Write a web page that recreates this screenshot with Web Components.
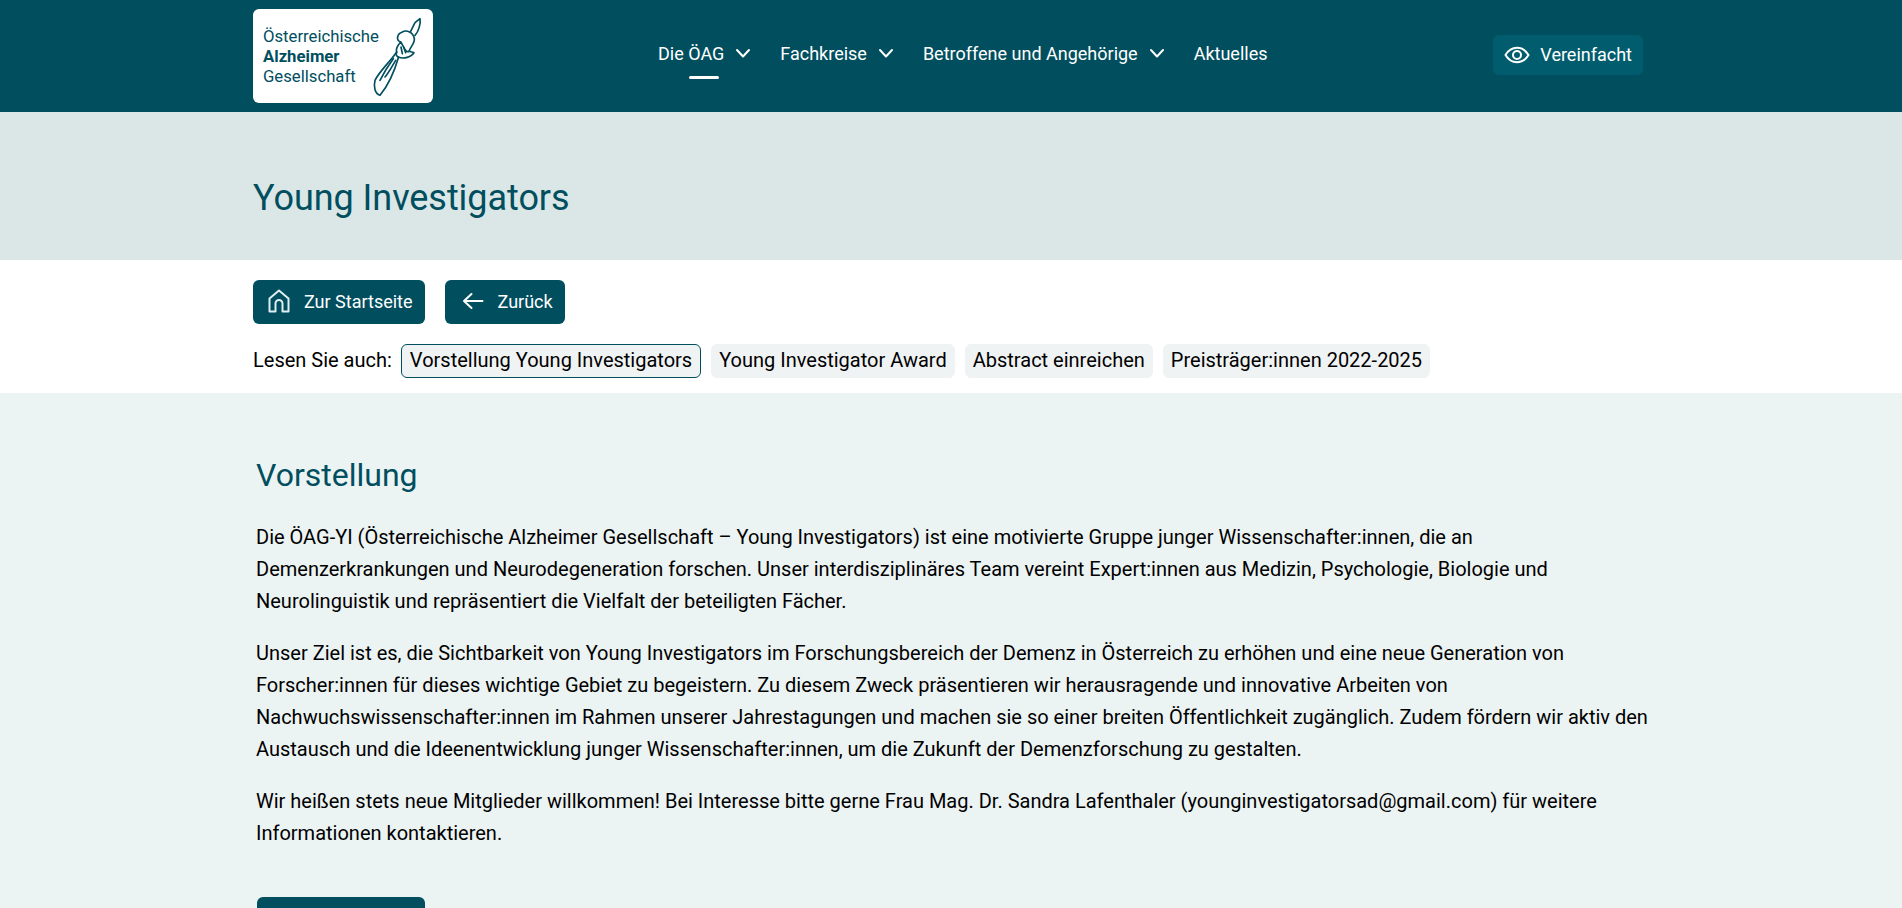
<!DOCTYPE html>
<html lang="de">
<head>
<meta charset="utf-8">
<title>Young Investigators</title>
<style>
  html, body { margin: 0; height: 908px; overflow: hidden; }
  body { font-family: Roboto, "Liberation Sans", sans-serif; color: #000; background: #fff; }
</style>
</head>
<body>
<site-header></site-header>
<page-hero>Young Investigators</page-hero>
<sub-nav></sub-nav>
<content-section>
  <h-title slot="title">Vorstellung</h-title>
  <text-para>Die ÖAG-YI (Österreichische Alzheimer Gesellschaft – Young Investigators) ist eine motivierte Gruppe junger Wissenschafter:innen, die an Demenzerkrankungen und Neurodegeneration forschen. Unser interdisziplinäres Team vereint Expert:innen aus Medizin, Psychologie, Biologie und Neurolinguistik und repräsentiert die Vielfalt der beteiligten Fächer.</text-para>
  <text-para>Unser Ziel ist es, die Sichtbarkeit von Young Investigators im Forschungsbereich der Demenz in Österreich zu erhöhen und eine neue Generation von Forscher:innen für dieses wichtige Gebiet zu begeistern. Zu diesem Zweck präsentieren wir herausragende und innovative Arbeiten von Nachwuchswissenschafter:innen im Rahmen unserer Jahrestagungen und machen sie so einer breiten Öffentlichkeit zugänglich. Zudem fördern wir aktiv den Austausch und die Ideenentwicklung junger Wissenschafter:innen, um die Zukunft der Demenzforschung zu gestalten.</text-para>
  <text-para>Wir heißen stets neue Mitglieder willkommen! Bei Interesse bitte gerne Frau Mag. Dr. Sandra Lafenthaler (younginvestigatorsad@gmail.com) für weitere Informationen kontaktieren.</text-para>
  <div slot="after" style="width:168px;height:44px;background:#004e5e;border-radius:6px;margin-left:1px"></div>
</content-section>

<script>
class SiteLogo extends HTMLElement {
  constructor() {
    super();
    this.attachShadow({ mode: "open" });
    this.shadowRoot.innerHTML = `
      <style>
        :host { display: block; width: 180px; height: 94px; background: #fff; border-radius: 6px; position: relative; color: #004e5e; }
        .txt { position: absolute; left: 10px; top: 18px; font-size: 16.7px; line-height: 20px; white-space: nowrap; }
        b { font-weight: 700; display: block; }
        svg { position: absolute; left: 112px; top: 3px; }
      </style>
      <div class="txt">Österreichische<b>Alzheimer</b>Gesellschaft</div>
      <svg width="65" height="88" viewBox="0 0 195 264" fill="none" stroke="#004e5e" stroke-width="5" stroke-linejoin="round" stroke-linecap="round">
        <path d="M137 58L150 32L165 20C168 35 160 60 150 70"/>
        <path d="M107 90C92 85 96 65 112 60C125 52 145 62 148 80C150 95 135 105 132 118C137 120 142 120 147 122C140 135 115 142 100 135"/>
        <path d="M107 90C115 100 122 125 132 118M107 90C98 100 92 112 95 122M100 135C94 132 92 126 95 122"/>
        <path d="M95 120C75 150 45 175 30 205C25 225 30 245 45 250C65 225 85 190 100 137"/>
        <path d="M85 140C70 160 55 185 45 205M92 145C80 165 70 185 60 195M108 105L112 125M116 105L122 122"/>
      </svg>
    `;
  }
}
customElements.define("site-logo", SiteLogo);

class NavItem extends HTMLElement {
  constructor() {
    super();
    this.attachShadow({ mode: "open" });
    this.shadowRoot.innerHTML = `
      <style>
        :host { display: flex; align-items: center; gap: 10px; height: 112px; padding-bottom: 6px; box-sizing: border-box; position: relative; font-size: 18px; font-weight: 450; color: #fff; white-space: nowrap; }
        svg { display: block; }
        :host([plain]) svg { display: none; }
        .bar { display: none; position: absolute; left: 31px; bottom: 33px; width: 30px; height: 3px; background: #fff; border-radius: 2px; }
        :host([active]) .bar { display: block; }
      </style>
      <slot></slot>
      <svg width="18" height="18" viewBox="0 0 18 18" fill="none" stroke="#fff" stroke-width="2" stroke-linecap="round" stroke-linejoin="round"><path d="M3 6l6 6.5L15 6"/></svg>
      <span class="bar"></span>
    `;
  }
}
customElements.define("nav-item", NavItem);

class SiteHeader extends HTMLElement {
  constructor() {
    super();
    this.attachShadow({ mode: "open" });
    this.shadowRoot.innerHTML = `
      <style>
        :host { display: block; height: 112px; background: #004e5e; }
        .inner { width: 1396px; margin: 0 auto; height: 112px; display: flex; align-items: center; }
        nav { display: flex; gap: 28px; margin-left: 225px; }
        .simple { margin-left: auto; margin-right: 6px; margin-bottom: 3px; display: flex; align-items: center; gap: 10px; height: 40px; padding: 0 11px; background: #015d6d; border-radius: 6px; color: #fff; font-size: 18px; font-weight: 450; }
      </style>
      <div class="inner">
        <site-logo></site-logo>
        <nav>
          <nav-item active>Die ÖAG</nav-item>
          <nav-item>Fachkreise</nav-item>
          <nav-item>Betroffene und Angehörige</nav-item>
          <nav-item plain>Aktuelles</nav-item>
        </nav>
        <div class="simple">
          <svg width="26" height="18" viewBox="0 0 26 18" fill="none" stroke="#fff" stroke-width="2"><path d="M1.5 9C4.5 4 8.5 1.8 13 1.8S21.5 4 24.5 9C21.5 14 17.5 16.2 13 16.2S4.5 14 1.5 9Z"/><circle cx="13" cy="9" r="4"/></svg>
          Vereinfacht
        </div>
      </div>
    `;
  }
}
customElements.define("site-header", SiteHeader);

class PageHero extends HTMLElement {
  constructor() {
    super();
    this.attachShadow({ mode: "open" });
    this.shadowRoot.innerHTML = `
      <style>
        :host { display: block; height: 148px; background: #dbe6e6; }
        h1 { width: 1396px; margin: 0 auto; height: 148px; padding-top: 24px; box-sizing: border-box; display: flex; align-items: center; font-size: 36px; font-weight: 400; letter-spacing: -0.05px; color: #004e5e; }
      </style>
      <h1><slot></slot></h1>
    `;
  }
}
customElements.define("page-hero", PageHero);

class ActionButton extends HTMLElement {
  constructor() {
    super();
    this.attachShadow({ mode: "open" });
    this.shadowRoot.innerHTML = `
      <style>
        :host { display: inline-flex; align-items: center; gap: 14px; height: 44px; padding: 0 12px 2px 15px; background: #004e5e; border-radius: 6px; color: #fff; font-size: 18px; font-weight: 450; box-sizing: border-box; }
        ::slotted(svg) { display: block; }
      </style>
      <slot name="icon"></slot><slot></slot>
    `;
  }
}
customElements.define("action-button", ActionButton);

class LinkTag extends HTMLElement {
  constructor() {
    super();
    this.attachShadow({ mode: "open" });
    this.shadowRoot.innerHTML = `
      <style>
        :host { display: inline-flex; align-items: center; height: 34px; padding: 0 7px 2px; background: #f0f3f4; border: 1px solid #f0f3f4; border-radius: 6px; font-size: 20px; color: #000; box-sizing: border-box; white-space: nowrap; }
        :host([current]) { border-color: #004e5e; padding: 0 8px 2px; }
      </style>
      <slot></slot>
    `;
  }
}
customElements.define("link-tag", LinkTag);

class SubNav extends HTMLElement {
  constructor() {
    super();
    this.attachShadow({ mode: "open" });
    this.shadowRoot.innerHTML = `
      <style>
        :host { display: block; height: 133px; background: #fff; }
        .inner { width: 1396px; margin: 0 auto; padding-top: 20px; display: flex; flex-direction: column; gap: 20px; }
        .btns { display: flex; gap: 20px; }
        .tags { display: flex; align-items: center; gap: 10px; font-size: 20px; }
        .label { margin-right: -1px; padding-bottom: 2px; }
      </style>
      <div class="inner">
        <div class="btns">
          <action-button>
            <svg slot="icon" width="22" height="24" viewBox="0 0 22 24" fill="none" stroke="#dfeef0" stroke-width="2" stroke-linejoin="round"><path d="M1.5 22.5V9.5L11 1.5l9.5 8v13H14.5v-8a3.5 3.5 0 0 0-7 0v8Z"/></svg>
            Zur Startseite
          </action-button>
          <action-button>
            <svg slot="icon" width="22" height="18" viewBox="0 0 22 18" fill="none" stroke="#fff" stroke-width="2" stroke-linecap="round" stroke-linejoin="round" style="margin-left:2px"><path d="M20.5 9H2M9.5 2L2 9l7.5 7"/></svg>
            Zurück
          </action-button>
        </div>
        <div class="tags">
          <span class="label">Lesen Sie auch:</span>
          <link-tag current>Vorstellung Young Investigators</link-tag>
          <link-tag>Young Investigator Award</link-tag>
          <link-tag>Abstract einreichen</link-tag>
          <link-tag>Preisträger:innen 2022-2025</link-tag>
        </div>
      </div>
    `;
  }
}
customElements.define("sub-nav", SubNav);

class HTitle extends HTMLElement {
  constructor() {
    super();
    this.attachShadow({ mode: "open" });
    this.shadowRoot.innerHTML = `
      <style>
        :host { display: block; font-size: 32px; line-height: 40px; color: #004e5e; margin-bottom: 26px; }
      </style>
      <slot></slot>
    `;
  }
}
customElements.define("h-title", HTitle);

class TextPara extends HTMLElement {
  constructor() {
    super();
    this.attachShadow({ mode: "open" });
    this.shadowRoot.innerHTML = `
      <style>
        :host { display: block; font-size: 20px; line-height: 32px; margin-bottom: 20px; color: #000; }
      </style>
      <slot></slot>
    `;
  }
}
customElements.define("text-para", TextPara);

class ContentSection extends HTMLElement {
  constructor() {
    super();
    this.attachShadow({ mode: "open" });
    this.shadowRoot.innerHTML = `
      <style>
        :host { display: block; background: #ecf3f3; min-height: 515px; }
        .inner { width: 1396px; margin: 0 auto; padding: 62px 0 0 3px; box-sizing: border-box; }
        .after { margin-top: 48px; }
      </style>
      <div class="inner">
        <slot name="title"></slot>
        <slot></slot>
        <div class="after"><slot name="after"></slot></div>
      </div>
    `;
  }
}
customElements.define("content-section", ContentSection);
</script>
</body>
</html>
